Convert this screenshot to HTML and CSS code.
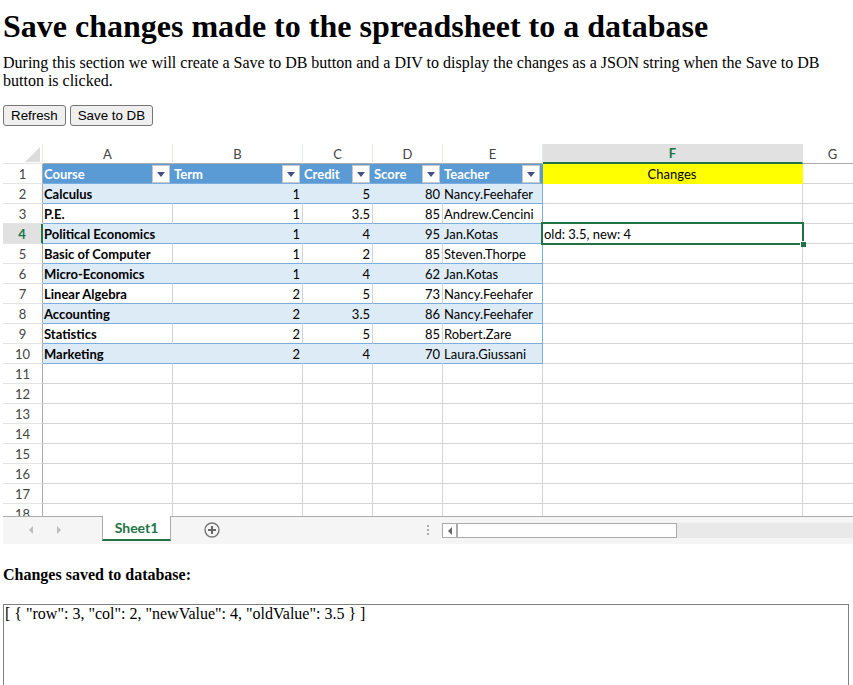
FILE: index.html
```
<!DOCTYPE html>
<html lang="en">
<head>
<meta charset="utf-8">
<title>Save changes made to the spreadsheet to a database</title>
<link rel="stylesheet" href="styles.css">
</head>
<body>
<header class="intro">
  <h1>Save changes made to the spreadsheet to a database</h1>
  <p>During this section we will create a Save to DB button and a DIV to display the changes as a JSON string when the Save to DB button is clicked.</p>
  <div class="actions">
    <button class="action" type="button">Refresh</button>
    <button class="action" type="button">Save to DB</button>
  </div>
</header>

<main>
  <section class="workbook">
    <div class="viewport">
      <table class="grid">
        <colgroup>
          <col class="w-head"><col class="w-name"><col class="w-name"><col class="w-num"><col class="w-num"><col class="w-teacher"><col class="w-changes"><col class="w-rest">
        </colgroup>
        <thead>
          <tr><th class="corner"><svg viewBox="0 0 15 15" width="15" height="15" aria-hidden="true"><path d="M15 0V15H0Z" fill="#dcdcdc"/></svg></th><th>A</th><th>B</th><th>C</th><th>D</th><th>E</th><th class="active">F</th><th>G</th></tr>
        </thead>
        <tbody id="rows"></tbody>
      </table>
    </div>
    <div class="tabbar">
      <div class="tabs">
        <button class="nav" type="button" aria-label="Previous sheet"><svg viewBox="0 0 4 8" width="4" height="8"><path d="M4 0V8L0 4Z" fill="#bdbdbd"/></svg></button>
        <button class="nav" type="button" aria-label="Next sheet"><svg viewBox="0 0 4 8" width="4" height="8"><path d="M0 0V8L4 4Z" fill="#bdbdbd"/></svg></button>
        <button class="tab" type="button">Sheet1</button>
        <button class="add" type="button" aria-label="New sheet"><svg viewBox="0 0 16 16" width="16" height="16"><circle cx="8" cy="8" r="7" fill="none" stroke="#777" stroke-width="1.4"/><path d="M8 4V12M4 8H12" stroke="#666" stroke-width="2"/></svg></button>
        <svg class="grip" viewBox="0 0 2 10" width="2" height="10" aria-hidden="true"><path d="M0 0H2V2H0ZM0 4H2V6H0ZM0 8H2V10H0Z" fill="#ababab"/></svg>
      </div>
      <div class="scroll">
        <button class="arrow" type="button" aria-label="Scroll left"><svg viewBox="0 0 4 8" width="4" height="8"><path d="M4 0V8L0 4Z" fill="#666"/></svg></button>
        <div class="thumb"></div>
      </div>
    </div>
  </section>

  <section class="saved">
    <h2>Changes saved to database:</h2>
    <div class="output">[ { "row": 3, "col": 2, "newValue": 4, "oldValue": 3.5 } ]</div>
  </section>
</main>
<script src="grid.js"></script>
</body>
</html>
```
FILE: styles.css
```
* { box-sizing: border-box; }

body {
  margin: 0;
  height: 100vh;
  overflow: hidden;
  background: #fff;
  color: #000;
  font: 16px/18px "Liberation Serif", serif;
}

button { font-family: "Liberation Sans", sans-serif; color: #000; }

.intro { padding: 8px 3px 0; }
h1 { margin: 0 0 10px; font-size: 32px; line-height: 36px; }
.intro p { margin: 0 0 15px; }

.actions { display: flex; gap: 4px; }
.action {
  height: 21px;
  padding: 0 7px;
  border: 1px solid #767676;
  border-radius: 3px;
  background: #efefef;
}

.workbook {
  margin: 18px 0 0 3px;
  font-family: Lato, "Open Sans", sans-serif;
}
.viewport { height: 372px; overflow: hidden; }

.grid {
  width: 860px;
  table-layout: fixed;
  border-collapse: separate;
  border-spacing: 0;
  font-size: 13px;
  line-height: 18px;
}
.w-head { width: 40px; }
.w-name { width: 130px; }
.w-num { width: 70px; }
.w-teacher { width: 100px; }
.w-changes { width: 260px; }
.w-rest { width: 60px; }

.grid th, .grid td {
  height: 20px;
  padding: 1px 2px 0 1px;
  border: solid #d4d4d4;
  border-width: 0 1px 1px 0;
  text-align: left;
  white-space: nowrap;
}
.grid thead th {
  padding: 1px 0 0;
  border-color: #ababab;
  border-right-color: #e4ebe4;
  color: #444;
  font-weight: 400;
  text-align: center;
}
.grid thead .active {
  border-bottom: 2px solid #217346;
  border-right-color: #e1e1e1;
  background: #e1e1e1;
  color: #217346;
  font-weight: 700;
  line-height: 17px;
}
.grid thead .corner { border-bottom-color: #e4e4e4; text-align: right; }
.corner svg { display: block; margin: 1px 2px 0 auto; }

.grid tbody th {
  padding: 1px 0 0;
  border-color: #e4e4e4;
  border-right-color: #ababab;
  color: #444;
  font-weight: 400;
  text-align: center;
}
.grid tbody .active {
  border-right: 2px solid #217346;
  background: #e1e1e1;
  color: #217346;
  font-weight: 700;
}

.grid .num { text-align: right; }
.grid .course { font-weight: 700; }
.grid .data { border-bottom-color: #7badde; }
.grid .band { border-right-color: #ddebf7; background: #ddebf7; }
.grid .last { border-right-color: #7badde; }
.grid .title {
  border-color: #5b9bd5;
  border-bottom-color: #7badde;
  background: #5b9bd5;
  color: #fff;
  font-weight: 700;
}
.label { display: flex; justify-content: space-between; align-items: center; height: 18px; }
.filter {
  display: flex;
  align-items: center;
  justify-content: center;
  width: 18px;
  height: 18px;
  padding: 0;
  border: 1px solid #c8c8c8;
  background: #fff;
}
.grid .heading { border-color: #ff0; background: #ff0; text-align: center; }

.grid .selected { position: relative; }
.outline {
  position: absolute;
  inset: -2px;
  border: 2px solid #217346;
}
.handle {
  position: absolute;
  right: -4px;
  bottom: -4px;
  width: 6px;
  height: 6px;
  border: solid #fff;
  border-width: 1px 0 0 1px;
  background: #217346;
}

.tabbar {
  display: flex;
  height: 28px;
  border-top: 1px solid #ababab;
  background: #f5f5f5;
}
.tabs { display: flex; align-items: center; flex: 0 0 439px; height: 26px; padding-left: 14px; }
.nav, .add, .arrow {
  display: flex;
  align-items: center;
  justify-content: center;
  padding: 0;
  border: 0;
  background: none;
}
.nav { width: 28px; height: 20px; }
.tab {
  align-self: flex-start;
  width: 69px;
  height: 25px;
  margin: -1px 33px 0 29px;
  padding: 0;
  border: solid #ababab;
  border-width: 0 1px;
  border-bottom: 2px solid #217346;
  background: #fff;
  color: #217346;
  font: 700 14px/22px Lato, "Open Sans", sans-serif;
}
.grip { margin: 0 13px 0 auto; }
.scroll {
  display: flex;
  flex: 1;
  height: 15px;
  margin-top: 6px;
  background: #e9e9e9;
}
.arrow { width: 15px; border: 1px solid #ababab; background: #fff; }
.thumb { width: 220px; border: 1px solid #ababab; background: #fff; }

.saved { padding: 22px 4px 0 3px; }
.saved h2 { margin: 0 0 20px; font-size: 16px; line-height: 18px; }
.output { height: 200px; padding: 0 1px; border: 1px solid #808080; }
```
FILE: grid.js
```
const data = [
  ["Calculus", 1, 5, 80, "Nancy.Feehafer"],
  ["P.E.", 1, 3.5, 85, "Andrew.Cencini"],
  ["Political Economics", 1, 4, 95, "Jan.Kotas"],
  ["Basic of Computer", 1, 2, 85, "Steven.Thorpe"],
  ["Micro-Economics", 1, 4, 62, "Jan.Kotas"],
  ["Linear Algebra", 2, 5, 73, "Nancy.Feehafer"],
  ["Accounting", 2, 3.5, 86, "Nancy.Feehafer"],
  ["Statistics", 2, 5, 85, "Robert.Zare"],
  ["Marketing", 2, 4, 70, "Laura.Giussani"]
];
const titles = ["Course", "Term", "Credit", "Score", "Teacher"];
const caret = '<svg viewBox="0 0 8 5" width="8" height="5"><path d="M0 0H8L4 5Z" fill="#444f87"/></svg>';

let html = '<tr><th scope="row">1</th>' + titles.map(t =>
  `<td class="title"><div class="label">${t}<button class="filter" type="button" aria-label="Filter ${t}">${caret}</button></div></td>`
).join("") + '<td class="heading">Changes</td><td></td></tr>';

data.forEach((row, i) => {
  const n = i + 2;
  const band = i % 2 === 0 ? " band" : "";
  html += `<tr><th scope="row"${n === 4 ? ' class="active"' : ""}>${n}</th>`;
  row.forEach((value, c) => {
    const kind = c === 0 ? " course" : c === 4 ? " last" : " num";
    html += `<td class="data${band}${kind}">${value}</td>`;
  });
  html += n === 4
    ? '<td class="selected">old: 3.5, new: 4<span class="outline"></span><span class="handle"></span></td><td></td></tr>'
    : "<td></td><td></td></tr>";
});

for (let n = 11; n <= 18; n++) {
  html += `<tr><th scope="row">${n}</th>${"<td></td>".repeat(7)}</tr>`;
}
document.getElementById("rows").innerHTML = html;
```
